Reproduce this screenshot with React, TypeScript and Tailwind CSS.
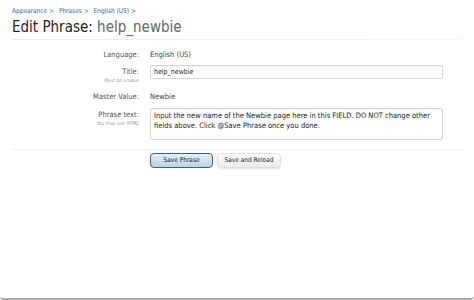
import React from 'react'

const font = { fontFamily: '"DejaVu Sans Condensed", "DejaVu Sans", Tahoma, sans-serif' }

function Row({ label, hint, children, top = 'pt-0' }: { label: string; hint?: string; children: React.ReactNode; top?: string }) {
  return (
    <div className="flex items-start">
      <div className={`w-[139px] shrink-0 text-right ${top}`}>
        <div className="text-[7.5px] leading-[10px] text-[#555]">{label}</div>
        {hint && <div className="text-[5px] italic leading-[7px] text-[#999]">{hint}</div>}
      </div>
      <div className="ml-[11px] flex-1 pr-[31px]">{children}</div>
    </div>
  )
}

export default function App() {
  return (
    <div style={font} className="h-[300px] w-[474px] overflow-hidden rounded-b-[4px] border-b-[2px] border-[#aaa] bg-white">
      <div className="px-[12px] pt-[7px]">
        <div className="flex gap-[5px] text-[6.5px] leading-[8px] text-[#2d6a8f]">
          <span>Appearance &gt;</span>
          <span>Phrases &gt;</span>
          <span>English (US) &gt;</span>
        </div>
        <h1 className="mt-[2px] text-[15px] leading-[20px] text-[#222]">
          Edit Phrase: <span className="text-[#666]">help_newbie</span>
        </h1>
        <div className="mt-[2px] h-px bg-gradient-to-r from-[#e4ecf2] to-[#f6f8fa]" />
      </div>

      <div className="mt-[10px] flex flex-col">
        <Row label="Language:">
          <div className="text-[7.5px] leading-[10px] text-[#444]">English (US)</div>
        </Row>
        <div className="mt-[5px]">
          <Row label="Title:" hint="Must be unique" top="pt-[2px]">
            <div className="h-[14px] rounded-[2px] border border-[#d6d6d6] bg-white px-[3px] text-[7px] leading-[12px] text-[#222] shadow-[inset_0_1px_1px_rgba(0,0,0,0.05)]">
              help_newbie
            </div>
          </Row>
        </div>
        <div className="mt-[8px]">
          <Row label="Master Value:">
            <div className="text-[7.5px] leading-[10px] text-[#444]">Newbie</div>
          </Row>
        </div>
        <div className="mt-[6px]">
          <Row label="Phrase text:" hint="You may use HTML" top="pt-[2px]">
            <div className="h-[32px] rounded-[2px] border border-[#d6d6d6] bg-white px-[3px] pt-[2px] text-[7.5px] leading-[10px] text-[#222] shadow-[inset_0_1px_1px_rgba(0,0,0,0.05)]">
              Input the new name of the Newbie page here in this FIELD. DO NOT change other fields above. Click @Save Phrase once you done.
            </div>
          </Row>
        </div>
      </div>

      <div className="mx-[12px] mt-[9px] h-px bg-[#eef1f4]" />

      <div className="mt-[3px] flex gap-[4px] pl-[150px]">
        <button className="h-[15px] w-[63px] rounded-[4px] border border-[#3f5f7a] bg-gradient-to-b from-[#e3eff7] to-[#b9d4e8] text-[6.5px] text-[#222]">
          Save Phrase
        </button>
        <button className="h-[15px] w-[64px] rounded-[4px] border border-[#e0e0e0] bg-gradient-to-b from-[#fafafa] to-[#ececec] text-[6.5px] text-[#222] shadow-[0_1px_2px_rgba(0,0,0,0.12)]">
          Save and Reload
        </button>
      </div>
    </div>
  )
}
